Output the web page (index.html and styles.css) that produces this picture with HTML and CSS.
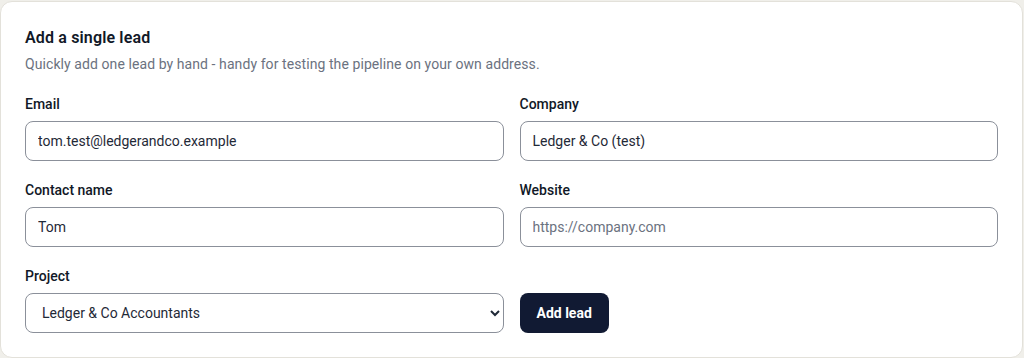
FILE: index.html
```html
<!DOCTYPE html>
<html lang="en">
<head>
  <meta charset="UTF-8">
  <title>Add a single lead</title>
  <meta name="viewport" content="width=device-width, initial-scale=1.0">
  <link rel="stylesheet" href="styles.css">
</head>
<body>
  <section class="card">
    <h2 class="card-title">Add a single lead</h2>
    <p class="card-desc">Quickly add one lead by hand - handy for testing the pipeline on your own address.</p>

    <form class="lead-form" onsubmit="return false">
      <div class="field">
        <label for="email">Email</label>
        <input id="email" type="email" value="tom.test@ledgerandco.example">
      </div>
      <div class="field">
        <label for="company">Company</label>
        <input id="company" type="text" value="Ledger &amp; Co (test)">
      </div>
      <div class="field">
        <label for="contact">Contact name</label>
        <input id="contact" type="text" value="Tom">
      </div>
      <div class="field">
        <label for="website">Website</label>
        <input id="website" type="url" placeholder="https://company.com">
      </div>
      <div class="field">
        <label for="project">Project</label>
        <select id="project">
          <option>Ledger &amp; Co Accountants</option>
        </select>
      </div>
      <div class="field field-action">
        <button type="submit" class="btn-primary">Add lead</button>
      </div>
    </form>
  </section>
</body>
</html>
```

FILE: styles.css
```css
html, body {
  margin: 0;
  padding: 0;
  background: #f0efea;
  font-family: 'Roboto', 'Liberation Sans', Arial, sans-serif;
  color: #111827;
}
body {
  padding: 1px 1px 1px 0;
}
.card {
  background: #fff;
  border: 1px solid #e3e1da;
  border-radius: 12px;
  padding: 24px;
  box-sizing: border-box;
}
.card-title {
  margin: 0;
  font-size: 16px;
  line-height: 24px;
  font-weight: 600;
  letter-spacing: 0.15px;
  color: #111827;
}
.card-desc {
  margin: 4px 0 0;
  font-size: 14px;
  line-height: 20px;
  letter-spacing: 0.08px;
  color: #6b7280;
}
.lead-form {
  margin-top: 20px;
  display: grid;
  grid-template-columns: 1fr 1fr;
  column-gap: 16px;
  row-gap: 19px;
}
.field {
  display: flex;
  flex-direction: column;
}
.field label {
  font-size: 14px;
  line-height: 20px;
  font-weight: 500;
  color: #111827;
  margin-bottom: 7px;
}
.field input,
.field select {
  height: 40px;
  box-sizing: border-box;
  border: 1px solid #8b909a;
  border-radius: 8px;
  padding: 0 12px;
  font-family: inherit;
  font-size: 14px;
  color: #1f2937;
  background: #fff;
}
.field input::placeholder {
  color: #6b7280;
}
.field select {
  padding: 0 12px 0 12px;
}
.field-action {
  justify-content: flex-end;
  align-items: flex-start;
}
.btn-primary {
  height: 40px;
  padding: 0 17px;
  border: 0;
  border-radius: 8px;
  background: #111a33;
  color: #fff;
  font-family: inherit;
  font-size: 14px;
  font-weight: 700;
  cursor: pointer;
}
```
